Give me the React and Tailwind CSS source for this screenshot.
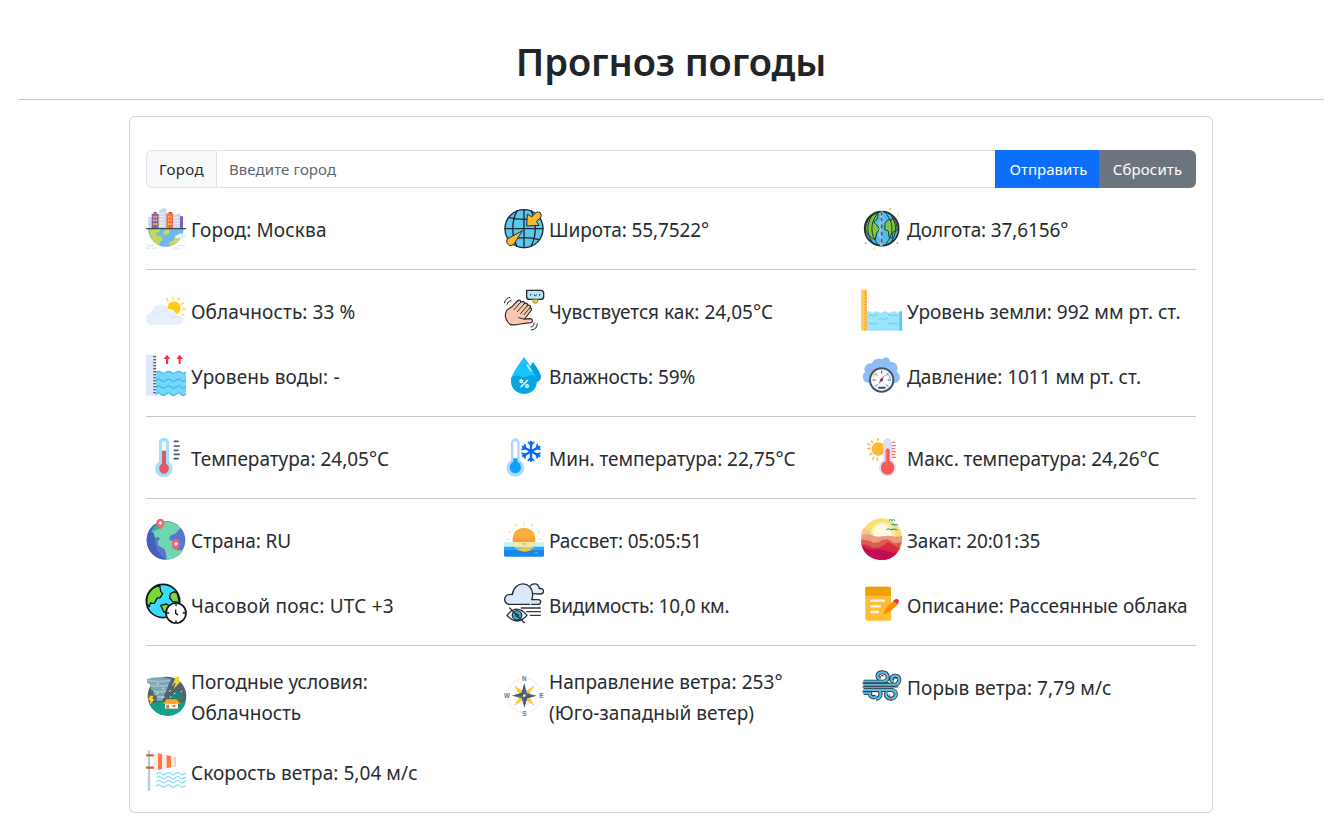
import React from "react";

function Icon({ box, children }) {
  return (
    <svg viewBox={box} className="h-[41px] w-[41px] shrink-0 overflow-visible" fill="none" strokeLinecap="round" strokeLinejoin="round">
      {children}
    </svg>
  );
}

const CityIcon = () => (
  <Icon box="78 295 123 123">
    <path d="M85 322h12v34H85zM162 318l8-6h12v44h-20z" fill="#c9dbe8" />
    <path d="M117 301l14-6 9 3v58h-23z" fill="#c9dbe8" />
    <path d="M120 312h12M120 321h12M120 330h12M120 339h12M120 348h12M165 323h12M165 332h12M165 341h12" stroke="#eef5fa" strokeWidth="3" />
    <path d="M95 312h21v44H95z" fill="#8261a8" />
    <path d="M101 306h9v6h-9zM180 320h9v36h-9z" fill="#8261a8" />
    <path d="M139 311h21v45h-21z" fill="#f8654c" />
    <path d="M146 307h10v5h-10z" fill="#d94e3e" />
    <path d="M102 318v32M109 318v32M146 318v32M153 318v32" stroke="#ffd05b" strokeWidth="4" strokeDasharray="6 5" strokeLinecap="butt" />
    <path d="M84 357H191c-2 31-25 54-54 54-28 0-51-23-53-54z" fill="#6fb9ea" />
    <path d="M88 358h35l-6 8-10 5 4 7 12 2 5 10-8 8-2 9c-18-8-29-24-30-49zM134 362l12-4 3 12-12 7-10-7zM166 379l20-2c-7 15-20 28-35 33l-5-10 14-8z" fill="#c5d85b" />
    <path d="M80 357h117" stroke="#3b4852" strokeWidth="4" />
    <path d="M167 386c-4-6 1-10 6-9 2-8 14-8 16-1 9-1 12 8 5 10z" fill="#e2f4fd" />
    <path d="M83 408h17M78 415h12M98 415h12M173 408h22M160 415h18" stroke="#c4e9f7" strokeWidth="3" />
  </Icon>
);

const LatitudeIcon = () => (
  <Icon box="42 25 123 123">
    <circle cx="102" cy="87" r="57" fill="#5cc8ed" stroke="#1b2a35" strokeWidth="4" />
    <g stroke="#1b2a35" strokeWidth="4">
      <path d="M102 30v114M45 87h114M81 33c-17 33-17 75 0 107M123 33c17 33 17 75 0 107M57 54q45 10 90 0M57 120q45-12 90 0" />
      <path d="M150 39c-6-4-11-2-16 3l-9 10-13-9-2 36 37-2-8-12 11-9c5-5 5-12 0-17z" fill="#fdb92e" strokeWidth="3" />
      <path d="M96 94l-43 23c-5 5-3 14 2 18 5 5 13 3 17-2z" fill="#fdb92e" strokeWidth="3" />
    </g>
  </Icon>
);

const LongitudeIcon = () => (
  <Icon box="36 25 123 123">
    <circle cx="95" cy="87" r="51" fill="#4dbdf0" stroke="#202a28" strokeWidth="5" />
    <path d="M47 87c0-23 17-43 37-47l-1 17-12 10 9 9 9 12-9 12-4 20c-16-5-29-20-29-33zM106 70l8-10 12 1 1-8c10 10 15 23 14 39l-12 5-3 19-9-4-2-18-10-4z" fill="#7bc943" stroke="#26372d" strokeWidth="3" />
    <path d="M82 42c-22 28-22 62 0 90M108 42c24 28 24 62 0 90M66 48c-17 26-17 52 0 78M124 48c17 26 17 52 0 78" stroke="#26372d" strokeWidth="3" />
    <path d="M96 39l-3 12 6 8-9 12 3 19-5 17 7 10-1 18" stroke="#79cdf2" strokeWidth="9" />
    <path d="M95 40v6m0 10v7m0 14v7m0 14v7m0 14v9" stroke="#a93545" strokeWidth="5" />
    <g strokeWidth="4"><path d="M121 26v3" stroke="#89cf64" /><path d="M145 43v2" stroke="#f6c94e" /><path d="M47 129v3" stroke="#53c0eb" /><path d="M142 129v2" stroke="#ee6778" /><path d="M73 145v1" stroke="#f6c94e" /></g>
  </Icon>
);

const CloudIcon = () => (
  <Icon box="48 16 123 123">
    <circle cx="132" cy="70" r="20" fill="#ffcb17" />
    <path d="M129 37v6M110 42l4 7M148 39l-4 7M162 54l-8 5M157 73h9M157 89l5 4" stroke="#ffd240" strokeWidth="4" />
    <path d="M66 120c-24-1-24-34 0-39 3-24 37-31 48-8 15-2 25 9 25 20 27-2 28 27 5 27z" fill="#e5f0fc" />
    <path d="M67 82q12-2 17 10M113 74q-12 1-17 13M139 95q-9 0-13 7" stroke="#d1e1f3" strokeWidth="2" />
  </Icon>
);

const FeelsIcon = () => (
  <Icon box="42 271 123 123">
    <path d="M60 374c-7-7-14-14-14-26 0-13 4-19 18-25l18-19c5-5 11-2 10 4 6-5 12-2 11 4 6-4 11 0 9 6 6-4 12 0 8 6 6 0 6 6 2 10l-18 24 15-1c10 0 12 10 3 12l-31 4c-12 3-22 4-31 1z" fill="#f9c8ae" stroke="#292929" strokeWidth="3.5" />
    <path d="M92 308l-20 22M103 312l-21 24M112 318l-20 24M120 324l-18 21M104 359l-18-5" stroke="#292929" strokeWidth="3" />
    <path d="M110 272h42q9 0 9 9v10q0 8-9 8h-34q-8 0-8-8z" fill="#b4e5f3" stroke="#292929" strokeWidth="4" />
    <path d="M128 299h15v5q-1 7-8 7t-7-7z" fill="#e9cf45" stroke="#696529" strokeWidth="2" />
    <path d="M122 284v3M149 284v3M132 286q4 5 8 0M43 310q3-15 17-17M51 314q2-10 12-12M123 382q10-2 9-12M124 391q18-2 18-19" stroke="#292929" strokeWidth="3" />
  </Icon>
);

const GroundIcon = () => (
  <Icon box="36 271 123 123">
    <path d="M33 270h18v123H33z" fill="#ffd15b" /><path d="M45 270h6v123h-6z" fill="#ffb94c" />
    <path d="M44 278v110" stroke="#d99f45" strokeWidth="6" strokeDasharray="2 7" strokeLinecap="butt" />
    <path d="M51 337q5-5 11 0t11 0q7-5 13 0t13 0q7-5 13 0t13 0q7-5 12 0t19-2v58H51z" fill="#9be4fb" />
    <path d="M148 335h8v58h-8z" fill="#55cbf1" />
    <path d="M57 347q5-4 9 0t9 0 9 0M115 347q5-4 9 0t9 0 9 0M89 358q5-4 9 0t9 0 7 0M57 372q5-4 9 0t9 0 9 0M115 372q5-4 9 0t9 0 9 0" stroke="#61cfe9" strokeWidth="3" />
  </Icon>
);

const WaterIcon = () => (
  <Icon box="48 211 123 123">
    <path d="M48 210h30v123H48z" fill="#dfe7fb" />
    <path d="M74 215v114" stroke="#36364c" strokeWidth="9" strokeDasharray="3 6" strokeLinecap="butt" />
    <path d="M78 264q7-7 15 0t15 0 15 0 15 0 15 0 15-2v65q-8 7-15 1t-15 0-15 0-15 0-15 0-15 1z" fill="#76d7fb" />
    <path d="M79 263q7-6 14 0t15 0 15 0 15 0 15 0 13 0M79 287q7-7 14 0t15 0 15 0 15 0 15 0 13 0M79 307q7-7 14 0t15 0 15 0 15 0 15 0 13 0M79 329q7-7 14 0t15 0 15 0 15 0 15 0 13 0" stroke="#36bdf4" strokeWidth="4" />
    <path d="M108 238v-15h-7l10-13 10 13h-7v15zM146 238v-15h-7l10-13 10 13h-7v15z" fill="#f52e46" />
  </Icon>
);

const HumidityIcon = () => (
  <Icon box="42 466 123 123">
    <path d="M129 486c8 14 25 34 24 46-1 16-23 22-36 12l-3-33z" fill="#049edb" />
    <path d="M102 471c-10 18-39 50-39 73 0 22 17 38 39 38s38-16 38-38c0-23-29-58-38-73z" fill="#1ac3f8" />
    <path d="M64 533q12-8 22-4 16 7 30-1 10-5 22 3c9 29-8 51-36 51-27 0-43-22-38-49z" fill="#08a4e4" />
    <path d="M112 497l8 12M123 513v1" stroke="#effcff" strokeWidth="4" />
    <path d="M93 561l20-19" stroke="white" strokeWidth="4" /><circle cx="94" cy="545" r="4" stroke="white" strokeWidth="4" /><circle cx="111" cy="559" r="4" stroke="white" strokeWidth="4" />
  </Icon>
);

const PressureIcon = () => (
  <Icon box="36 466 123 123">
    <path d="M57 550c-18-1-25-21-12-33-6-15 6-28 21-26 5-15 24-16 30-12 12-11 23-5 25 8 18-2 26 15 19 29 16 11 12 31-6 34z" fill="#91bbf4" />
    <circle cx="95" cy="541" r="35" fill="#fbfcff" stroke="#415463" strokeWidth="6" /><circle cx="95" cy="541" r="26" stroke="#d4dfe9" strokeWidth="2" />
    <path d="M69 541h7M76 522l5 5M95 514v7M114 522l-5 5M121 541h-7M76 560l5-5M114 560l-5-5" stroke="#4f6270" strokeWidth="3" />
    <path d="M70 530q3-8 9-11" stroke="#ffc343" strokeWidth="3" /><path d="M112 521q8 8 9 16" stroke="#6dc598" strokeWidth="3" />
    <path d="M99 537l6-12-14 13-5 16 12-12z" fill="#e35a60" /><circle cx="95" cy="541" r="4" fill="#374a5a" /><path d="M87 564h17" stroke="#415463" strokeWidth="6" />
  </Icon>
);

const TemperatureIcon = () => (
  <Icon box="48 457 123 123">
    <path d="M87 531v-57c0-20 30-20 30 0v57c22 17 7 46-15 46s-38-29-15-46z" fill="#a7dff7" />
    <path d="M96 500v-25q6-13 12 0v25z" fill="#f3f5fa" /><path d="M96 498h12v39c16 8 8 30-6 30s-21-22-6-30z" fill="#df5869" />
    <path d="M133 470h11M133 484h15M133 497h11M133 509h15M133 522h11" stroke="#455970" strokeWidth="5" />
  </Icon>
);

const MinIcon = () => (
  <Icon box="42 22 123 123">
    <path d="M63 91V37q13-26 26 0v54c24 15 14 50-13 50S39 108 63 91z" fill="#b1d6ff" />
    <path d="M70 91V40q6-13 12 0v51z" fill="white" /><path d="M70 86h12v10c18 9 12 35-6 35s-24-26-6-35z" fill="#0ca2ff" />
    <path d="M123 37v56M99 51l49 28M148 51L99 79" stroke="#0668f5" strokeWidth="7" />
    <path d="M115 38l8 8 8-8M115 92l8-8 8 8M96 59l11-3-3-11M150 59l-11-3 3-11M96 71l11 3-3 11M150 71l-11 3 3 11" stroke="#0668f5" strokeWidth="5" />
  </Icon>
);

const MaxIcon = () => (
  <Icon box="36 22 123 123">
    <circle cx="85" cy="58" r="20" fill="#fdb834" /><path d="M84 27v4M65 34l3 5M54 56h6M60 75l5-4M82 91v-5M54 42l5 3M68 89l3-5" stroke="#fdbe3b" strokeWidth="5" />
    <path d="M100 90V37q13-26 26 0v53c24 18 12 50-13 50S77 108 100 90z" fill="#dfddf7" />
    <path d="M107 62q6-12 12 0v32c23 9 15 41-6 41s-29-32-6-41z" fill="#f75a54" /><path d="M109 63v42" stroke="#ff7b72" strokeWidth="3" />
    <path d="M127 38h7M127 48h10M127 57h7M127 66h10M127 75h7M127 83h10" stroke="#ef746f" strokeWidth="4" />
  </Icon>
);

const CountryIcon = () => (
  <Icon box="48 28 123 123">
    <circle cx="108" cy="92" r="58" fill="#5878d0" />
    <path d="M108 34c-38 0-58 28-58 58 0 31 25 58 57 58-43-33-43-88 1-116z" fill="#4261bd" />
    <path d="M78 46c23-18 55-12 73 9l-14 16-18 9-1 9 15 10 1 11-9 3 14 8 19 1-5 9c-11 13-24 19-43 18l-2-17-4-13-20-12-1-12 7-8-6-6-9 3-3-11-4-7-5 1z" fill="#70d6af" />
    <path d="M65 63q8-17 22-25l9 14-14 8-8 4z" fill="#37b390" />
    <path d="M91 61c-6-10-12-15-12-22 0-16 24-16 24 0 0 7-6 12-12 22zM138 124c-6-10-13-15-13-22 0-17 25-17 25 0 0 7-7 12-12 22z" fill="#f0657b" />
    <circle cx="91" cy="40" r="5" fill="#fff0e9" /><circle cx="138" cy="103" r="5" fill="#fff0e9" />
  </Icon>
);

const SunriseIcon = () => (
  <Icon box="42 268 123 123">
    <circle cx="102" cy="330" r="34" fill="#ff9a47" /><path d="M69 321c5-35 62-34 66 0-13 9-53 15-66 0z" fill="#fbae3c" />
    <path d="M102 278v7M77 284l4 7M128 284l-4 7M56 306l7 4M149 306l-7 4M49 329h6M149 329h6" stroke="#fce18e" strokeWidth="4" />
    <path d="M42 338h120v15H42z" fill="#c5f3fa" /><path d="M42 351h120v14H42z" fill="#29a5f3" /><path d="M42 362h120v15q0 4-4 4H46q-4 0-4-4z" fill="#1686f0" />
    <path d="M69 338h66l-4 13H73z" fill="#ffe98c" /><path d="M73 352h58c-7 18-44 19-58 0z" fill="#f8c33b" />
    <path d="M77 356h16M122 357h13M134 370h10M97 343h12" stroke="#58b9e1" strokeWidth="3" />
  </Icon>
);

const SunsetIcon = () => (
  <Icon box="36 268 123 123">
    <circle cx="95" cy="328" r="62" fill="#f5df70" />
    <path d="M34 316c-1-8 3-15 8-22 14 8 30 22 48 22z" fill="#f5c48b" />
    <circle cx="99" cy="312" r="36" fill="#f6ecaa" /><circle cx="97" cy="310" r="27" fill="#fffbe2" />
    <path d="M35 316q13-4 30 0 15 8 30 4 20-4 33 0 16 2 29-1-1 21-11 35H36z" fill="#ee9a81" />
    <path d="M33 330q24-1 36 9 17 2 26-7 19-9 35 8 15 1 25-3-5 28-29 43H57c-18-15-24-30-24-50z" fill="#da5c54" />
    <path d="M35 343q20 3 30 10 18 5 32-4l16-13q21 14 38 19-19 32-45 35-55 3-71-47z" fill="#d72a40" />
    <path d="M36 349q24 13 34 11 20-6 40 4 21 8 33 4-17 23-48 23c-32 0-51-18-59-42z" fill="#c20b55" />
    <path d="M118 271q5-3 8 1 4-4 8 0M126 285q5-3 9 1 4-4 8 0M110 299q7-4 12 1l6-1M125 300q6-5 15 0" stroke="#22868b" strokeWidth="3" />
  </Icon>
);

const TimezoneIcon = () => (
  <Icon box="48 223 123 123">
    <circle cx="99" cy="274" r="50" fill="#38dcff" stroke="#151515" strokeWidth="5" />
    <path d="M51 283c-4-29 12-49 38-57l3 19 6 7-7 11-10 3-8 15-12-1-3 11zM142 251l-9-5-12 6-2 13 9 11 20 2zM92 287l17-4 14 9-10 20-12-6z" fill="#77d83a" stroke="#151515" strokeWidth="4" />
    <circle cx="138" cy="310" r="30" fill="white" stroke="#151515" strokeWidth="5" />
    <path d="M138 282v6M138 333v5M110 310h6M160 310h6M137 301v10l6 4" stroke="#151515" strokeWidth="4" />
  </Icon>
);

const VisibilityIcon = () => (
  <Icon box="42 463 123 123">
    <path d="M118 474c2-10 26-21 30 3 15-4 17 16 3 16l-20-1" fill="#e8f0fc" stroke="#282d35" strokeWidth="4" />
    <path d="M56 524c-18-7-15-30 7-30 1 0 3 0 4 1 5-44 61-42 61 1 0 5-1 9-3 14h20c10 0 9 14-1 14h-19" fill="#dce9fc" stroke="#282d35" strokeWidth="4" />
    <path d="M56 524h63" stroke="#282d35" strokeWidth="4" />
    <path d="M94 535h57M110 546h41M121 557h30" stroke="#343840" strokeWidth="4" />
    <path d="M51 557q29-37 60 0-30 34-60 0z" fill="#e7f4fa" stroke="#283038" strokeWidth="4" /><circle cx="81" cy="557" r="14" fill="#43b1dd" stroke="#283038" strokeWidth="4" /><circle cx="81" cy="557" r="5" stroke="#263c50" strokeWidth="3" />
    <path d="M59 535l44 44" stroke="#29333d" strokeWidth="4" />
  </Icon>
);

const DescriptionIcon = () => (
  <Icon box="36 463 123 123">
    <rect x="46" y="471" width="77" height="102" rx="5" fill="#ffbd35" /><path d="M46 498v-22q0-5 5-5h67q5 0 5 5v22z" fill="#eea000" />
    <path d="M64 513h38M64 530h26M64 547h20" stroke="#fff7eb" strokeWidth="7" />
    <path d="M99 554l8-18 25-24 12 12-26 24z" fill="#ff8a0c" /><path d="M130 514l6-5q7-3 10 2 3 6-5 13z" fill="#d83c39" />
  </Icon>
);

const ConditionsIcon = () => (
  <Icon box="48 49 123 123">
    <circle cx="111" cy="109" r="58" fill="#53636e" />
    <path d="M56 128c21 6 40-7 58 1 15 4 34-3 53 0-17 53-91 53-111-1z" fill="#14a088" />
    <path d="M51 58q32-11 74 0l-10 17-5 17-7 13-7 19-17-1 2-13-11-6 1-9-9-7-1-12-9-7z" fill="#7da7b5" />
    <path d="M53 62q34 7 65 0M63 77q22 5 50 0M72 94q17 5 34 0M83 112h19" stroke="#a3c5cf" strokeWidth="4" />
    <path d="M139 51h11l-6 14h9l-22 23 6-17h-8zM60 108h10l-3 10 7 1-15 16 2-13h-7z" fill="#f9d51c" />
    <path d="M129 118c-9-3-3-11 2-11 0-15 22-11 20-2 14 0 14 15 0 18z" fill="#168c78" /><path d="M147 140v-24m0 10l10-7" stroke="#985348" strokeWidth="4" />
    <path d="M105 129h39v18h-39z" fill="#fff4df" /><path d="M99 132l11-13h29l12 13z" fill="#ffa623" /><path d="M109 135h8v12h-8zM128 136h8v6h-8z" fill="#d77555" />
    <path d="M84 71l-2 3M101 85l-2 3M121 92l-2 3M130 73l-2 3M83 100l-2 3M99 112l-2 3M135 100l-2 3M155 94l-2 3M123 111l-2 3" stroke="white" strokeWidth="3" />
  </Icon>
);

const DirectionIcon = () => (
  <Icon box="42 49 123 123">
    <circle cx="103" cy="108" r="51" stroke="#e8f3fc" strokeWidth="4" />
    <path d="M72 77l25 16 10 15-18-2zM134 77l-25 16-10 15 18-2zM72 139l16-28 19-3-10 15zM134 139l-16-28-19-3 10 15z" fill="#ffc644" />
    <path d="M103 71l8 29 28 8-28 8-8 28-8-28-29-8 29-8z" fill="#576b7e" /><path d="M103 71v37l36 0-28 8-8 28v-36H66l29-8z" fill="#455b70" /><circle cx="103" cy="108" r="4" fill="#e0e9ed" />
    <g fill="#687989" fontFamily="Liberation Sans, sans-serif" fontSize="19" fontWeight="bold" textAnchor="middle"><text x="103" y="63">N</text><text x="103" y="168">S</text><text x="51" y="115">W</text><text x="154" y="115">E</text></g>
  </Icon>
);

const GustIcon = () => (
  <Icon box="36 19 123 123">
    <path d="M41 66h60c18-3 16-28-5-28-15 0-19 18-5 20M41 75h95c15-2 17-27 0-27-12 0-17 14-5 18M41 91h41c15 2 12 26-4 26M41 100h20c-4 11 10 18 18 8M85 91h41c18 4 13 27-4 26-15-1-18-15-9-19" stroke="#292f32" strokeWidth="12" strokeLinecap="butt" />
    <path d="M39 66h62c18-3 16-28-5-28-15 0-19 18-5 20M39 75h97c15-2 17-27 0-27-12 0-17 14-5 18M39 91h43c15 2 12 26-4 26M39 100h22c-4 11 10 18 18 8M85 91h41c18 4 13 27-4 26-15-1-18-15-9-19" stroke="#59bbe8" strokeWidth="7" strokeLinecap="butt" />
    <path d="M38 70h78M38 96h46M38 82h105" stroke="#292f32" strokeWidth="3" />
    <path d="M91 52q2-8 9-4M130 60q1-8 9-4M119 105q-6 8 4 10M63 104q2 7 10 4" stroke="#292f32" strokeWidth="3" />
  </Icon>
);

const WindSpeedIcon = () => (
  <Icon box="48 274 123 123">
    <path d="M57 275v116" stroke="#bbcad9" strokeWidth="7" /><path d="M51 287h18M51 324h18" stroke="#ca6743" strokeWidth="7" />
    <path d="M72 280l66 12v28l-66 9z" fill="#f4eae6" /><path d="M84 281l12 3v44l-12 3zM110 287l13 3v33l-13 2z" fill="#ff7746" /><path d="M132 291l6 1v28l-6 1z" fill="#e6d8d5" />
    {[342, 354, 366, 379].map((y) => <path key={y} d={`M80 ${y}q7-7 14 0t14 0 14 0 14 0 14 0 16-2`} stroke="#85dafa" strokeWidth="3.5" />)}
  </Icon>
);

const groups = [
  [
    [CityIcon, "Город: Москва", "tracking-[0.15px]"],
    [LatitudeIcon, "Широта: 55,7522°", "tracking-[-0.12px]"],
    [LongitudeIcon, "Долгота: 37,6156°", "tracking-[-0.12px]"],
  ],
  [
    [CloudIcon, "Облачность: 33 %", "tracking-[0.12px]"],
    [FeelsIcon, "Чувствуется как: 24,05°C", "tracking-[0px]"],
    [GroundIcon, "Уровень земли: 992 мм рт. ст.", "tracking-[0px]"],
    [WaterIcon, "Уровень воды: -", "tracking-[0.15px]"],
    [HumidityIcon, "Влажность: 59%", "tracking-[-0.05px]"],
    [PressureIcon, "Давление: 1011 мм рт. ст.", "tracking-[-0.05px]"],
  ],
  [
    [TemperatureIcon, "Температура: 24,05°C", "tracking-[0px]"],
    [MinIcon, "Мин. температура: 22,75°C", "tracking-[-0.05px]"],
    [MaxIcon, "Макс. температура: 24,26°C", "tracking-[-0.05px]"],
  ],
  [
    [CountryIcon, "Страна: RU", "tracking-[-0.1px]"],
    [SunriseIcon, "Рассвет: 05:05:51", "tracking-[-0.15px]"],
    [SunsetIcon, "Закат: 20:01:35", "tracking-[-0.17px]"],
    [TimezoneIcon, "Часовой пояс: UTC +3", "tracking-[0.23px]"],
    [VisibilityIcon, "Видимость: 10,0 км.", "tracking-[-0.2px]"],
    [DescriptionIcon, "Описание: Рассеянные облака", "tracking-[0px]"],
  ],
  [
    [ConditionsIcon, "Погодные условия:\nОблачность", "tracking-[0px]"],
    [DirectionIcon, "Направление ветра: 253°\n(Юго-западный ветер)", "tracking-[0.06px]"],
    [GustIcon, "Порыв ветра: 7,79 м/с", "tracking-[0.1px]"],
    [WindSpeedIcon, "Скорость ветра: 5,04 м/с", "tracking-[0.06px]"],
  ],
];

function Metric({ icon: Glyph, label, tracking }) {
  const shift = label.includes("\n") ? "mt-px -mb-px" : "mt-[1.5px] -mb-[1.5px]";
  return (
    <div className="flex min-h-[41px] items-center gap-1 self-start">
      <Glyph />
      <p className={`text-[19px] leading-[30.6px] whitespace-pre ${shift} ${tracking}`}>{label}</p>
    </div>
  );
}

export default function App() {
  return (
    <main className="flex min-h-[837px] flex-col items-center bg-white px-[18px] font-['Noto_Sans','Open_Sans',sans-serif] text-[#282c30]">
      <header className="h-[100px] w-full border-b border-[#c8c9ca] pt-[37px]">
        <h1 className="text-center text-[38px] leading-[48px] font-semibold tracking-[-0.1px] text-[#212529]">Прогноз погоды</h1>
      </header>
      <section className="mt-4 w-[1084px] rounded-md border border-[#d2d2d2] px-4 pt-[33px] pb-5">
        <form className="flex h-[38px] text-[15px]" onSubmit={(e) => e.preventDefault()}>
          <label htmlFor="city" className="flex w-[71px] items-center justify-center rounded-l-md border border-[#dee2e6] bg-[#f8f9fa] tracking-[0.45px]">Город</label>
          <input id="city" placeholder="Введите город" className="min-w-0 flex-1 border-y border-[#dee2e6] px-3 tracking-[0.08px] outline-none placeholder:text-[#60666c]" />
          <button className="w-[104px] bg-[#0d6efd] pl-[3px] text-white">Отправить</button>
          <button className="w-[97px] rounded-r-md bg-[#6c757d] tracking-[0.15px] text-white">Сбросить</button>
        </form>
        {groups.map((items, i) => (
          <div key={i} className={i ? "mt-5 border-t border-[#c8c9ca] pt-5" : "mt-5"}>
            <div className="grid grid-cols-3 gap-x-6 gap-y-6">
              {items.map(([icon, label, tracking]) => <Metric key={label} icon={icon} label={label} tracking={tracking} />)}
            </div>
          </div>
        ))}
      </section>
    </main>
  );
}
